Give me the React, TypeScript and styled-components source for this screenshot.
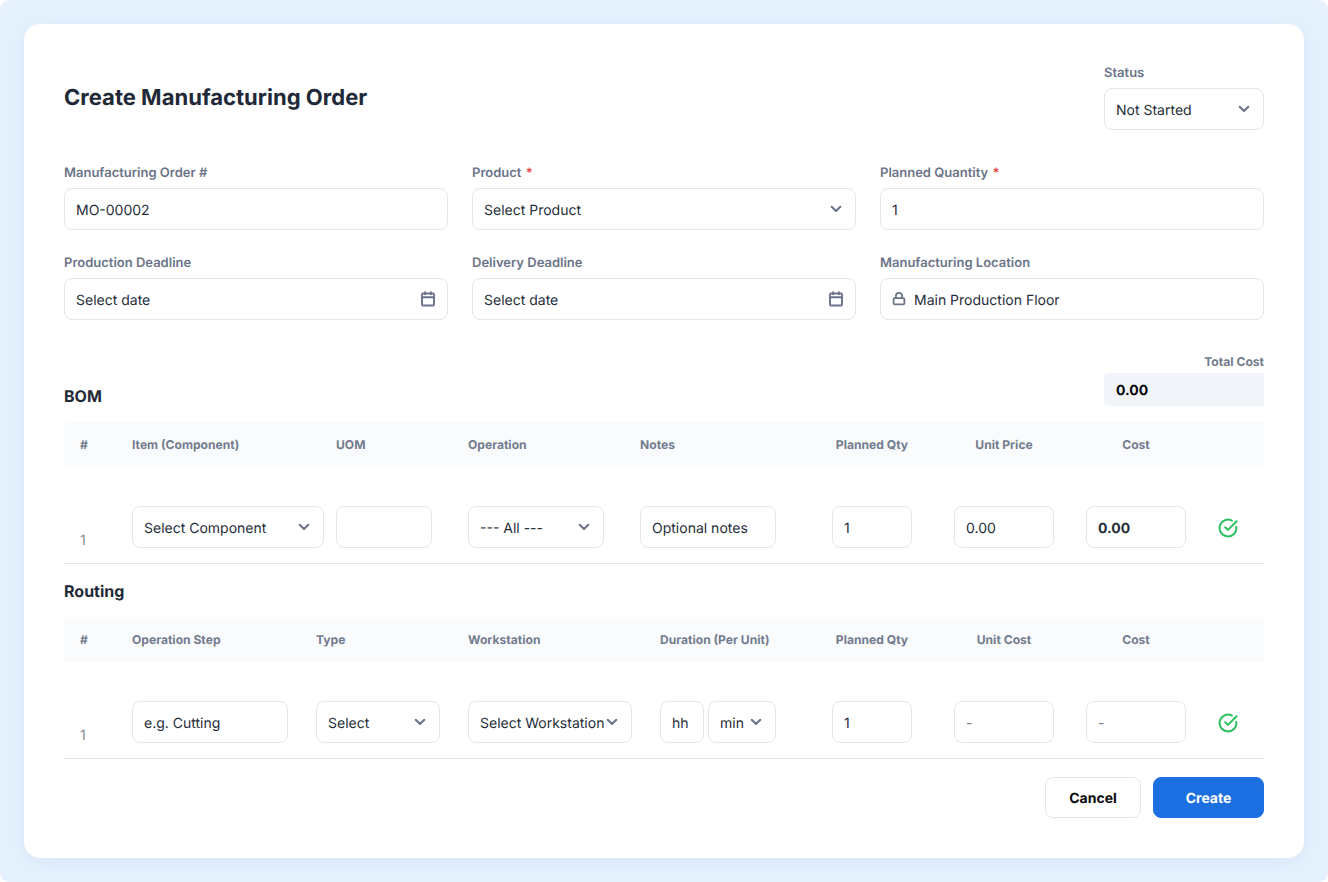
import React from 'react';
import styled, { createGlobalStyle } from 'styled-components';

const GlobalStyle = createGlobalStyle`
  * { box-sizing: border-box; }
  html, body { margin: 0; background: #fff; }
  body { font-family: Inter, "Liberation Sans", sans-serif; color: #1f2937; text-rendering: geometricPrecision; }
`;

const Page = styled.div`
  height: 882px;
  padding: 24px;
  background: #e5f1fd;
  border-radius: 9px;
`;

const Card = styled.main`
  height: 834px;
  padding: 40px;
  background: #fff;
  border-radius: 16px;
  box-shadow: 0 4px 20px rgba(60, 100, 180, 0.08);
`;

const Header = styled.header`
  display: flex;
  justify-content: space-between;
  height: 100px;
`;

const Title = styled.h1`
  margin: 19px 0 0;
  font-size: 22.05px;
  line-height: 30px;
  font-weight: 700;
  color: #1f2937;
`;

const Field = styled.div<{ $width?: number }>`
  display: flex;
  flex-direction: column;
  gap: 6px;
  width: ${({ $width }) => ($width ? `${$width}px` : 'auto')};
`;

const Label = styled.label`
  font-size: 13px;
  line-height: 18px;
  font-weight: 600;
  color: #6b7489;
`;

const Required = styled.span`
  margin-left: 1px;
  color: #ef4444;
`;

const Control = styled.div<{ $width?: number; $bold?: boolean; $muted?: boolean }>`
  display: flex;
  align-items: center;
  flex: none;
  width: ${({ $width }) => ($width ? `${$width}px` : '100%')};
  height: 42px;
  padding: 0 11px;
  border: 1px solid #e4e6eb;
  border-radius: 8px;
  background: #fff;
  font-size: 14px;
  font-weight: ${({ $bold }) => ($bold ? 700 : 400)};
  color: ${({ $muted }) => ($muted ? '#757b87' : '#252d3a')};
  white-space: nowrap;
  svg { flex: none; }
`;

const Value = styled.span`
  flex: 1;
  min-width: 0;
  padding-top: 2px;
`;

const FieldGrid = styled.section`
  display: grid;
  grid-template-columns: repeat(3, 1fr);
  gap: 24px;
`;

const SectionBar = styled.div<{ $height: number }>`
  display: flex;
  justify-content: space-between;
  align-items: flex-end;
  height: ${({ $height }) => $height}px;
`;

const SectionTitle = styled.h2`
  margin: 0 0 16px;
  font-size: 16px;
  line-height: 20px;
  font-weight: 700;
  color: #1f2937;
`;

const Total = styled.div`
  width: 160px;
  margin-bottom: 16px;
`;

const TotalLabel = styled.div`
  font-size: 12.1px;
  line-height: 16px;
  margin-bottom: 3px;
  font-weight: 700;
  text-align: right;
  color: #737b8e;
`;

const TotalValue = styled.div`
  height: 33px;
  padding: 0 12px;
  line-height: 35px;
  border-radius: 4px 0 0 4px;
  background: #f1f4f8;
  font-size: 14px;
  font-weight: 700;
  color: #05070b;
`;

const bomGrid = '68px 204px 132px 172px 166px 132px 132px 132px 62px';
const routingGrid = '68px 184px 152px 192px 146px 132px 132px 132px 62px';

const TableHead = styled.div<{ $columns: string }>`
  display: grid;
  grid-template-columns: ${({ $columns }) => $columns};
  align-items: center;
  height: 45px;
  background: #f9fbfd;
  border-radius: 4px 0 0 0;
`;

const HeadCell = styled.div<{ $center?: boolean; $index?: boolean }>`
  padding-left: ${({ $index }) => ($index ? 16 : 0)}px;
  font-size: 12.1px;
  line-height: 15px;
  font-weight: 700;
  color: #737b8e;
  text-align: ${({ $center }) => ($center ? 'center' : 'left')};
`;

const TableRow = styled.div<{ $columns: string }>`
  display: grid;
  grid-template-columns: ${({ $columns }) => $columns};
  align-items: end;
  height: 97px;
  padding-bottom: 15px;
  border-bottom: 1px solid #e4e6eb;
`;

const Cell = styled.div<{ $center?: boolean }>`
  display: flex;
  gap: 4px;
  justify-content: ${({ $center }) => ($center ? 'center' : 'flex-start')};
`;

const RowIndex = styled.div`
  padding-left: 16px;
  font-size: 14px;
  line-height: 14px;
  color: #888c94;
`;

const StatusCell = styled.div`
  display: flex;
  align-items: center;
  height: 42px;
  padding: 2px 0 0 16px;
`;

const Actions = styled.footer`
  display: flex;
  justify-content: flex-end;
  gap: 12px;
  margin-top: 18px;
`;

const Button = styled.button<{ $primary?: boolean }>`
  width: ${({ $primary }) => ($primary ? 111 : 96)}px;
  height: 41px;
  padding: 2px 0 0;
  border: 1px solid ${({ $primary }) => ($primary ? '#1c6fe0' : '#e4e6eb')};
  border-radius: 8px;
  background: ${({ $primary }) => ($primary ? '#1c6fe0' : '#fff')};
  color: ${({ $primary }) => ($primary ? '#fff' : '#05070b')};
  font: 700 14px Inter, sans-serif;
  text-rendering: geometricPrecision;
`;

const Chevron = () => (
  <svg width="16" height="16" viewBox="0 0 16 16" fill="none" stroke="#6b7489" strokeWidth="2.1" strokeLinecap="round" strokeLinejoin="round">
    <path d="M3.7 5.8 8 10l4.3-4.2" />
  </svg>
);

const CalendarIcon = () => (
  <svg width="16" height="16" viewBox="0 0 16 16" fill="none" stroke="#6b7489" strokeWidth="1.9" strokeLinecap="round" strokeLinejoin="round">
    <rect x="2" y="2.5" width="12" height="12" rx="1" />
    <path d="M5.1 1.1v2.2M10.9 1.1v2.2M2 6.2h12" />
  </svg>
);

const LockIcon = () => (
  <svg width="16" height="16" viewBox="0 0 16 16" fill="none" stroke="#6b7489" strokeWidth="1.8" strokeLinecap="round" strokeLinejoin="round">
    <rect x="2.6" y="7.2" width="10.8" height="6.2" rx="1.2" />
    <path d="M4.9 7V4.9a3.1 3.1 0 0 1 6.2 0V7" />
  </svg>
);

const CheckIcon = () => (
  <svg width="20" height="20" viewBox="0 0 20 20" fill="none" stroke="#2fc060" strokeWidth="2" strokeLinecap="round" strokeLinejoin="round">
    <path d="M18.3 8.8A8.4 8.4 0 1 1 13.9 2.6" />
    <path d="m7.2 9.3 2.8 2.6 8.6-8.6" />
  </svg>
);

type InputProps = { value: string; width?: number; select?: boolean; date?: boolean; bold?: boolean; muted?: boolean; locked?: boolean };

const LockSlot = styled.span`
  display: flex;
  margin: 0 7px 0 -1px;
`;

const Input = ({ value, width, select, date, bold, muted, locked }: InputProps) => (
  <Control $width={width} $bold={bold} $muted={muted}>
    {locked && <LockSlot><LockIcon /></LockSlot>}
    <Value>{value}</Value>
    {select && <Chevron />}
    {date && <CalendarIcon />}
  </Control>
);

type FormFieldProps = InputProps & { label: string; required?: boolean };

const FormField = ({ label, required, width, ...input }: FormFieldProps) => (
  <Field $width={width}>
    <Label>{label}{required && <Required> *</Required>}</Label>
    <Input {...input} />
  </Field>
);

const Head = ({ columns, labels }: { columns: string; labels: string[] }) => (
  <TableHead $columns={columns}>
    {labels.map((label, i) => (
      <HeadCell key={label} $index={i === 0} $center={i > 4}>{label}</HeadCell>
    ))}
  </TableHead>
);

const Amounts = ({ price, cost, bold }: { price: string; cost: string; bold?: boolean }) => (
  <>
    <Cell $center><Input width={80} value="1" /></Cell>
    <Cell $center><Input width={100} value={price} muted={!bold} /></Cell>
    <Cell $center><Input width={100} value={cost} bold={bold} muted={!bold} /></Cell>
    <StatusCell><CheckIcon /></StatusCell>
  </>
);

export default function App() {
  return (
    <Page>
      <GlobalStyle />
      <Card>
        <Header>
          <Title>Create Manufacturing Order</Title>
          <FormField label="Status" value="Not Started" width={160} select />
        </Header>
        <FieldGrid>
          <FormField label="Manufacturing Order #" value="MO-00002" />
          <FormField label="Product" value="Select Product" select required />
          <FormField label="Planned Quantity" value="1" required />
          <FormField label="Production Deadline" value="Select date" date />
          <FormField label="Delivery Deadline" value="Select date" date />
          <FormField label="Manufacturing Location" value="Main Production Floor" locked />
        </FieldGrid>

        <SectionBar $height={102}>
          <SectionTitle>BOM</SectionTitle>
          <Total>
            <TotalLabel>Total Cost</TotalLabel>
            <TotalValue>0.00</TotalValue>
          </Total>
        </SectionBar>
        <Head columns={bomGrid} labels={['#', 'Item (Component)', 'UOM', 'Operation', 'Notes', 'Planned Qty', 'Unit Price', 'Cost']} />
        <TableRow $columns={bomGrid}>
          <RowIndex>1</RowIndex>
          <Cell><Input width={192} value="Select Component" select /></Cell>
          <Cell><Input width={96} value="" /></Cell>
          <Cell><Input width={136} value="--- All ---" select /></Cell>
          <Cell><Input width={136} value="Optional notes" /></Cell>
          <Amounts price="0.00" cost="0.00" bold />
        </TableRow>

        <SectionBar $height={53}>
          <SectionTitle>Routing</SectionTitle>
        </SectionBar>
        <Head columns={routingGrid} labels={['#', 'Operation Step', 'Type', 'Workstation', 'Duration (Per Unit)', 'Planned Qty', 'Unit Cost', 'Cost']} />
        <TableRow $columns={routingGrid}>
          <RowIndex>1</RowIndex>
          <Cell><Input width={156} value="e.g. Cutting" /></Cell>
          <Cell><Input width={124} value="Select" select /></Cell>
          <Cell><Input width={164} value="Select Workstation" select /></Cell>
          <Cell>
            <Input width={44} value="hh" />
            <Input width={68} value="min" select />
          </Cell>
          <Amounts price="-" cost="-" />
        </TableRow>

        <Actions>
          <Button type="button">Cancel</Button>
          <Button type="button" $primary>Create</Button>
        </Actions>
      </Card>
    </Page>
  );
}
